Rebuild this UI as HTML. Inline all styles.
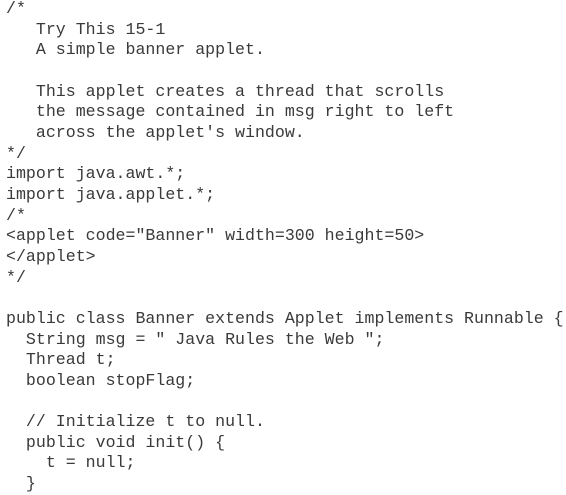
<!DOCTYPE html>
<html><head><style>
html,body{margin:0;padding:0;background:#fff;width:566px;height:489px;overflow:hidden}
pre{position:absolute;left:6px;top:-1px;margin:0;font-family:"Liberation Mono",monospace;font-size:16.6px;line-height:20.65px;color:#3a3a3a;letter-spacing:0}
</style></head><body>
<pre>/*
   Try This 15-1
   A simple banner applet.

   This applet creates a thread that scrolls
   the message contained in msg right to left
   across the applet's window.
*/
import java.awt.*;
import java.applet.*;
/*
&lt;applet code="Banner" width=300 height=50&gt;
&lt;/applet&gt;
*/

public class Banner extends Applet implements Runnable {
  String msg = " Java Rules the Web ";
  Thread t;
  boolean stopFlag;

  // Initialize t to null.
  public void init() {
    t = null;
  }</pre>
</body></html>
